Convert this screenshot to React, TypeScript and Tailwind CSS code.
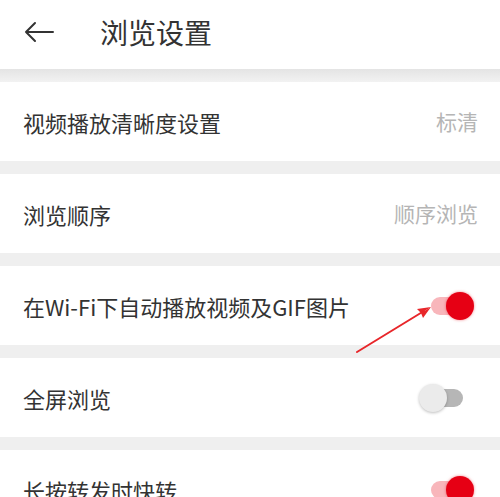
import React from "react";

const font = { fontFamily: '"Noto Sans CJK SC", "Noto Sans", sans-serif' };

function Toggle({ on }: { on: boolean }) {
  return (
    <div className="relative w-[55px] h-[30px] mr-[4px]">
      <div
        className={
          "absolute left-[12px] top-[6px] w-[32px] h-[18px] rounded-full " +
          (on ? "bg-[#f8b6bb]" : "bg-[#b6b6b6]")
        }
      />
      {on ? (
        <div className="absolute right-0 top-[1px] w-[28px] h-[28px] rounded-full bg-[#e60014] shadow-[0_0_3px_rgba(230,0,20,0.5)]" />
      ) : (
        <div className="absolute left-0 top-[1px] w-[28px] h-[28px] rounded-full bg-[#ebebeb] shadow-[0_1px_3px_rgba(0,0,0,0.25)]" />
      )}
    </div>
  );
}

function Row({ label, value, toggle }: { label: string; value?: string; toggle?: boolean }) {
  return (
    <div className="flex items-center justify-between h-[79px] bg-white pl-[23px] pr-[22px] shrink-0">
      <span className="text-[22px] text-[#333333] leading-none">{label}</span>
      {value !== undefined && (
        <span className="text-[21px] text-[#b5b5b5] leading-none">{value}</span>
      )}
      {toggle !== undefined && <Toggle on={toggle} />}
    </div>
  );
}

function Gap() {
  return <div className="h-[13px] bg-[#efefef] shrink-0" />;
}

export default function App() {
  return (
    <div className="relative w-[500px] h-[497px] overflow-hidden bg-[#efefef] flex flex-col" style={font}>
      <div className="flex items-center h-[69px] bg-white shrink-0 pb-[6px]">
        <svg width="30" height="22" viewBox="0 0 30 22" className="ml-[24px]">
          <path d="M2 11 H29 M11 2 L2 11 L11 20" stroke="#333" strokeWidth="2" fill="none" strokeLinecap="round" strokeLinejoin="round" />
        </svg>
        <span className="ml-[46px] text-[28px] text-[#333333] leading-none">浏览设置</span>
      </div>
      <div className="h-[13px] shrink-0 bg-gradient-to-b from-[#e4e4e4] to-[#f2f2f2]" />
      <Row label="视频播放清晰度设置" value="标清" />
      <Gap />
      <Row label="浏览顺序" value="顺序浏览" />
      <Gap />
      <Row label="在Wi-Fi下自动播放视频及GIF图片" toggle={true} />
      <Gap />
      <Row label="全屏浏览" toggle={false} />
      <Gap />
      <Row label="长按转发时快转" toggle={true} />
      <svg className="absolute left-0 top-0 pointer-events-none" width="500" height="497" viewBox="0 0 500 497">
        <path d="M357 352 L424 311" stroke="#e8262a" strokeWidth="2" strokeLinecap="round" />
        <path d="M431 307 L417 309 L421 313 Z" fill="#e8262a" />
        <path d="M431 307 L423 318 L421 313 Z" fill="#e8262a" />
      </svg>
    </div>
  );
}
